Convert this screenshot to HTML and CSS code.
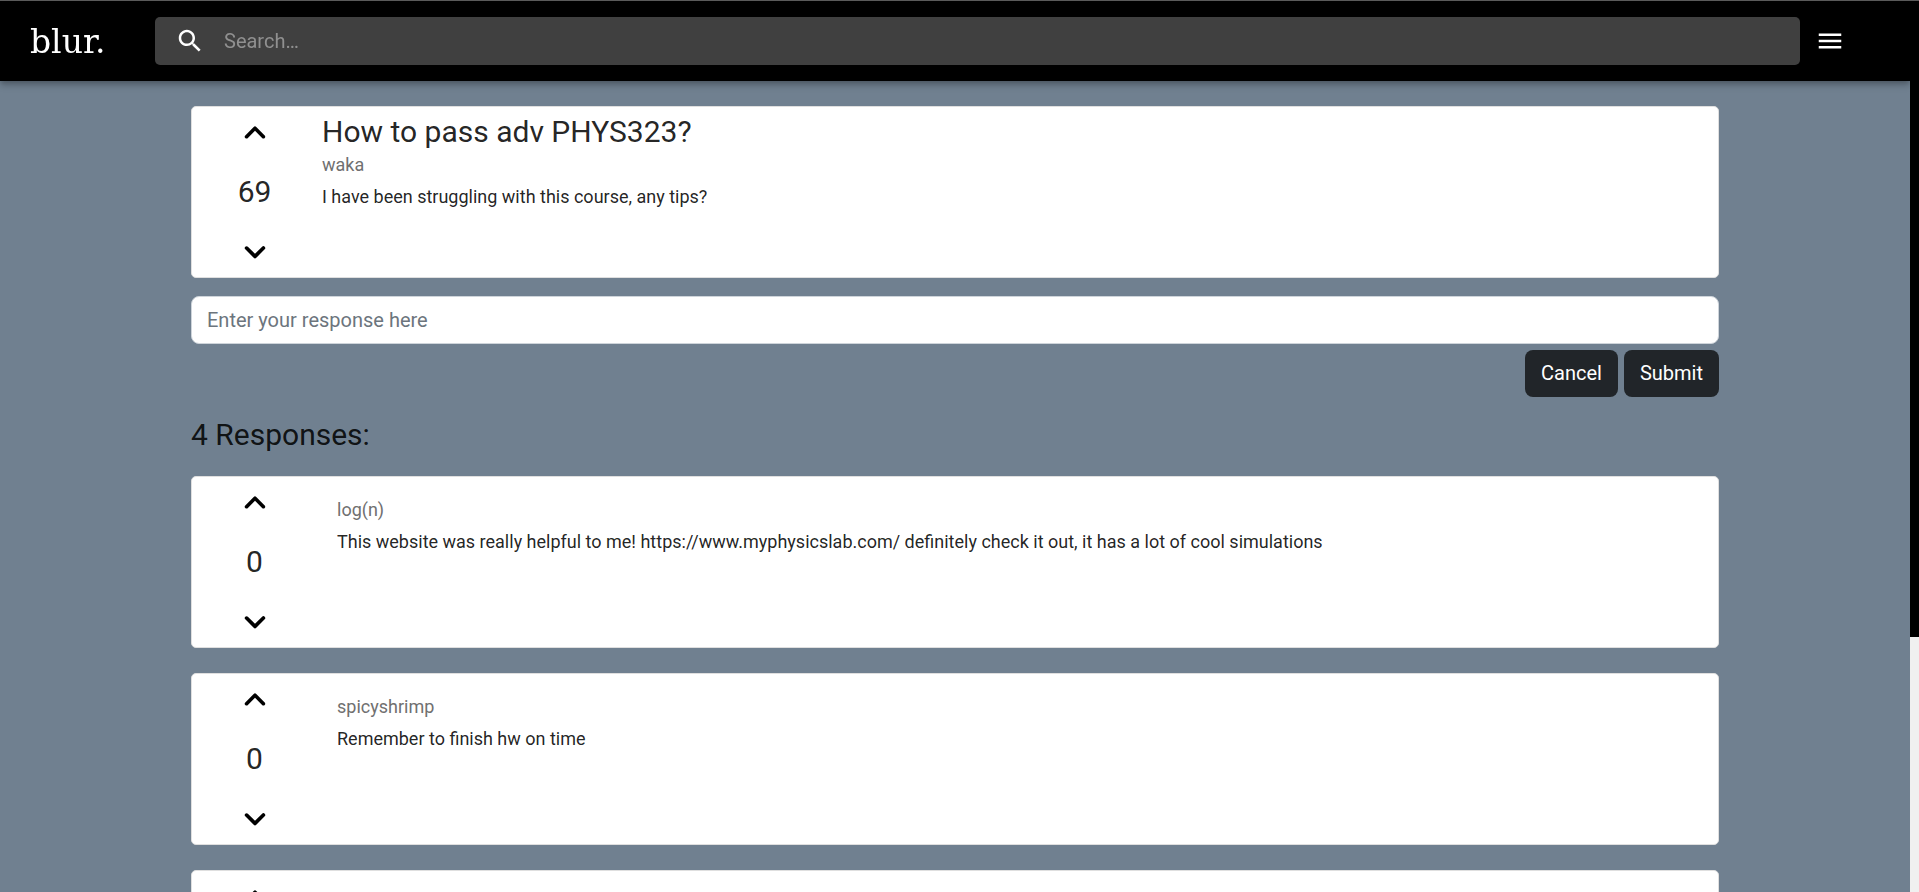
FILE: index.html
```
<!DOCTYPE html>
<html lang="en">
<head>
<meta charset="utf-8">
<title>blur.</title>
<link rel="stylesheet" href="styles.css">
</head>
<body>
<svg class="sprite" aria-hidden="true">
  <symbol id="up" viewBox="0 0 24 24"><path d="M8.12 14.71 12 10.83l3.88 3.88c.39.39 1.02.39 1.41 0s.39-1.02 0-1.41L12.7 8.71a.996.996 0 0 0-1.41 0L6.7 13.3a.996.996 0 0 0 0 1.41c.39.38 1.03.39 1.42 0z"/></symbol>
  <symbol id="down" viewBox="0 0.7 24 24"><path d="M8.12 9.29 12 13.17l3.88-3.88a.996.996 0 1 1 1.41 1.41l-4.59 4.59a.996.996 0 0 1-1.41 0L6.7 10.7a.996.996 0 0 1 0-1.41c.39-.38 1.03-.39 1.42 0z"/></symbol>
</svg>
<div class="viewport">
  <div class="page">
    <header class="bar">
      <a class="logo" href="#">blur.</a>
      <label class="search">
        <svg class="icon" viewBox="0 0 24 24" aria-hidden="true"><path d="M15.5 14h-.79l-.28-.27C15.41 12.59 16 11.11 16 9.5 16 5.91 13.09 3 9.5 3S3 5.91 3 9.5 5.91 16 9.5 16c1.61 0 3.09-.59 4.23-1.57l.27.28v.79l5 4.99L20.49 19l-4.99-5zm-6 0C7.01 14 5 11.99 5 9.5S7.01 5 9.5 5 14 7.01 14 9.5 11.99 14 9.5 14z"/></svg>
        <input class="search-input" type="text" placeholder="Search…" aria-label="Search">
      </label>
      <button class="menu" type="button" aria-label="Menu">
        <svg class="icon" viewBox="0 0 24 24" aria-hidden="true"><path d="M3 18h18v-2H3v2zm0-5h18v-2H3v2zm0-7v2h18V6H3z"/></svg>
      </button>
    </header>
    <main class="content">
      <article class="card">
        <div class="votes">
          <button class="vote" type="button" aria-label="Upvote"><svg class="arrow"><use href="#up"/></svg></button>
          <span class="score">69</span>
          <button class="vote" type="button" aria-label="Downvote"><svg class="arrow"><use href="#down"/></svg></button>
        </div>
        <div class="post">
          <h1 class="title">How to pass adv PHYS323?</h1>
          <p class="author">waka</p>
          <p class="text">I have been struggling with this course, any tips?</p>
        </div>
      </article>
      <form class="respond">
        <input class="response-input" type="text" placeholder="Enter your response here" aria-label="Your response">
        <div class="actions">
          <button class="btn" type="button">Cancel</button>
          <button class="btn" type="button">Submit</button>
        </div>
      </form>
      <h2 class="count">4 Responses:</h2>
      <section class="responses">
        <article class="card">
          <div class="votes">
            <button class="vote" type="button" aria-label="Upvote"><svg class="arrow"><use href="#up"/></svg></button>
            <span class="score">0</span>
            <button class="vote" type="button" aria-label="Downvote"><svg class="arrow"><use href="#down"/></svg></button>
          </div>
          <div class="reply">
            <p class="author">log(n)</p>
            <p class="text">This website was really helpful to me! https://www.myphysicslab.com/ definitely check it out, it has a lot of cool simulations</p>
          </div>
        </article>
        <article class="card">
          <div class="votes">
            <button class="vote" type="button" aria-label="Upvote"><svg class="arrow"><use href="#up"/></svg></button>
            <span class="score">0</span>
            <button class="vote" type="button" aria-label="Downvote"><svg class="arrow"><use href="#down"/></svg></button>
          </div>
          <div class="reply">
            <p class="author">spicyshrimp</p>
            <p class="text">Remember to finish hw on time</p>
          </div>
        </article>
        <article class="card">
          <div class="votes">
            <button class="vote" type="button" aria-label="Upvote"><svg class="arrow"><use href="#up"/></svg></button>
          </div>
        </article>
      </section>
    </main>
  </div>
  <div class="track"><div class="thumb"></div></div>
</div>
</body>
</html>
```
FILE: styles.css
```
* { box-sizing: border-box; }
body {
  margin: 0;
  background: slategray;
  color: rgba(0,0,0,.87);
  font-family: Roboto, "Liberation Sans", sans-serif;
}
h1, h2, p { margin: 0; font-weight: 400; }
button, input { font: inherit; border: 0; }
button { padding: 0; background: none; cursor: pointer; }
.sprite { display: none; }

.viewport {
  display: flex;
  height: 100vh;
  border-top: 1px solid #5a5a5a;
}
.page {
  flex: 1;
  min-width: 0;
  overflow-y: auto;
  scrollbar-width: none;
}
.track { width: 9px; background: #f0f0f0; }
.thumb { height: 71.4%; background: #000; }

.bar {
  position: sticky;
  top: 0;
  z-index: 1;
  display: flex;
  align-items: center;
  height: 80px;
  padding: 0 65px 0 30px;
  background: #000;
  color: #fff;
  box-shadow: 0 2px 5px -1px rgba(0,0,0,.2), 0 5px 6px 0 rgba(0,0,0,.14), 0 1px 12px 0 rgba(0,0,0,.12);
}
.logo {
  width: 125px;
  color: #fff;
  font-family: "DejaVu Serif", serif;
  font-size: 33px;
  text-decoration: none;
}
.search {
  flex: 1;
  display: flex;
  align-items: center;
  gap: 19px;
  height: 48px;
  padding: 0 20px;
  border-radius: 5px;
  background: #404040;
}
.icon { display: block; width: 30px; height: 30px; fill: currentColor; }
.search-input {
  flex: 1;
  padding: 0;
  background: transparent;
  color: #fff;
  font-size: 20px;
  outline: 0;
}
.search-input::placeholder { color: #909090; opacity: 1; }
.menu { margin-left: 15px; color: #fff; }

.content {
  width: 80%;
  margin: 0 auto;
  padding: 25px 0;
}
.card {
  display: flex;
  min-height: 172px;
  border: 1px solid #dfdfdf;
  border-radius: 5px;
  background: #fff;
}
.votes {
  display: flex;
  flex-direction: column;
  align-items: center;
  gap: 16px;
  width: 125px;
  padding-top: 4px;
}
.vote { height: 44px; color: #000; }
.arrow { display: block; width: 44px; height: 44px; fill: currentColor; }
.score { padding-bottom: 2px; font-size: 30px; line-height: 42px; }
.post { padding: 5px; }
.reply { padding: 20px; }
.title { font-size: 30px; line-height: 40px; }
.author { font-size: 18px; line-height: 26px; color: #707070; }
.text { margin-top: 6px; font-size: 18px; line-height: 26px; }

.respond { margin-top: 18px; }
.response-input {
  display: block;
  width: 100%;
  height: 48px;
  padding: 0 15px;
  border: 1px solid #ced4da;
  border-radius: 8px;
  background: #fff;
  font-size: 20px;
}
.response-input::placeholder { color: #6c757d; opacity: 1; }
.actions {
  display: flex;
  justify-content: flex-end;
  gap: 6px;
  margin-top: 6px;
}
.btn {
  padding: 0 16px;
  border-radius: 8px;
  background: #212529;
  color: #fff;
  font-size: 20px;
  line-height: 47px;
}
.count {
  margin: 18px 0 21px;
  font-size: 30px;
  line-height: 40px;
}
.responses { display: grid; gap: 25px; }
```
